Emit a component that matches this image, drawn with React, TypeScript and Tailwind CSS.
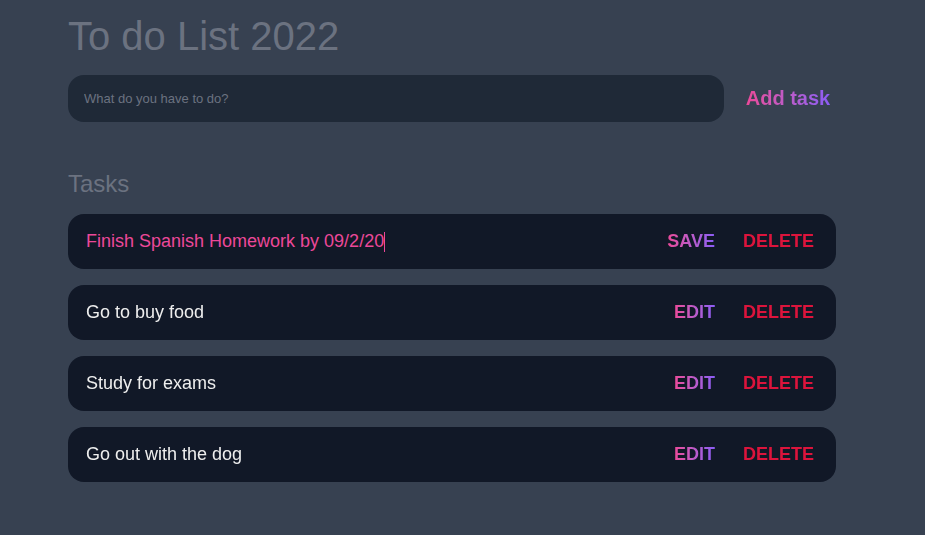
import { useState } from "react";

const gradientText = "bg-linear-to-r from-[#ec4899] to-[#8b5cf6] bg-clip-text text-transparent";

type Task = { id: number; text: string; editing: boolean };

const initialTasks: Task[] = [
  { id: 1, text: "Finish Spanish Homework by 09/2/20", editing: true },
  { id: 2, text: "Go to buy food", editing: false },
  { id: 3, text: "Study for exams", editing: false },
  { id: 4, text: "Go out with the dog", editing: false },
];

export default function App() {
  const [tasks, setTasks] = useState(initialTasks);
  const [draft, setDraft] = useState("");

  const update = (id: number, change: Partial<Task>) =>
    setTasks(tasks.map((t) => (t.id === id ? { ...t, ...change } : t)));

  return (
    <div className="min-h-screen bg-[#374151] pr-[21px] font-['Liberation_Sans',Arial,sans-serif]">
      <div className="mx-auto max-w-[800px] px-4">
        <header className="pt-3">
          <h1 className="text-[40px] leading-[48px] text-[#6b7280]">To do List 2022</h1>
          <form
            className="mt-[15px] flex"
            onSubmit={(e) => {
              e.preventDefault();
              if (!draft.trim()) return;
              setTasks([...tasks, { id: Date.now(), text: draft, editing: false }]);
              setDraft("");
            }}
          >
            <input
              type="text"
              aria-label="New task"
              placeholder="What do you have to do?"
              value={draft}
              onChange={(e) => setDraft(e.target.value)}
              className="h-[47px] min-w-0 flex-1 rounded-2xl bg-[#1f2937] px-4 text-[13px] text-[#e5e5e5] outline-none placeholder:text-[#6b7280]"
            />
            <button type="submit" className="ml-4 w-24 pb-0.5 text-[20px] leading-7 font-bold">
              <span className={gradientText}>Add task</span>
            </button>
          </form>
        </header>
        <main className="pt-12">
          <h2 className="text-[24px] leading-7 text-[#6b7280]">Tasks</h2>
          <ul className="mt-4 flex flex-col gap-4">
            {tasks.map((task) => (
              <li key={task.id} className="flex h-[55px] items-center rounded-2xl bg-[#111827] pr-[22px] pl-[18px]">
                <div className="flex min-w-0 flex-1 items-center">
                  <input
                    type="text"
                    aria-label="Task"
                    value={task.text}
                    readOnly={!task.editing}
                    autoFocus={task.editing}
                    onChange={(e) => update(task.id, { text: e.target.value })}
                    className={`field-sizing-content max-w-full text-[18px] caret-transparent outline-none ${task.editing ? "text-[#ec4899]" : "text-[#eee]"}`}
                  />
                  {task.editing && <span className="h-5 w-px bg-[#ec4899]" />}
                </div>
                <button
                  type="button"
                  onClick={() => update(task.id, { editing: !task.editing })}
                  className={`text-[18px] font-bold uppercase ${gradientText}`}
                >
                  {task.editing ? "Save" : "Edit"}
                </button>
                <button
                  type="button"
                  onClick={() => setTasks(tasks.filter((t) => t.id !== task.id))}
                  className="ml-7 text-[18px] font-bold text-[#dc143c] uppercase"
                >
                  Delete
                </button>
              </li>
            ))}
          </ul>
        </main>
      </div>
    </div>
  );
}
